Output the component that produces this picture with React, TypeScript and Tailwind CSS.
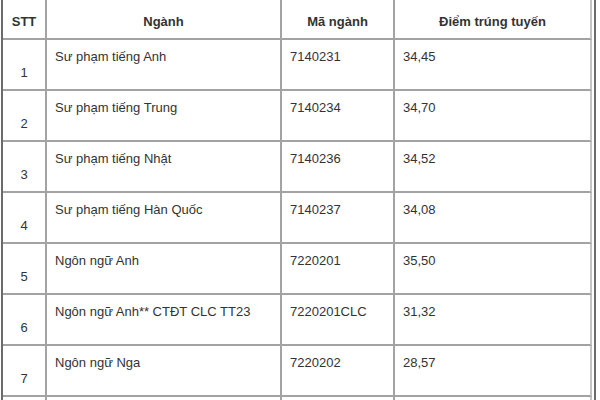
import React from "react";

const rows = [
  ["1", "Sư phạm tiếng Anh", "7140231", "34,45"],
  ["2", "Sư phạm tiếng Trung", "7140234", "34,70"],
  ["3", "Sư phạm tiếng Nhật", "7140236", "34,52"],
  ["4", "Sư phạm tiếng Hàn Quốc", "7140237", "34,08"],
  ["5", "Ngôn ngữ Anh", "7220201", "35,50"],
  ["6", "Ngôn ngữ Anh** CTĐT CLC TT23", "7220201CLC", "31,32"],
  ["7", "Ngôn ngữ Nga", "7220202", "28,57"],
  ["8", "", "", ""],
];

const cell = "border-r-2 border-b-2 border-[#a3a3a3]";
const lastCell = "border-r-2 border-b-2 border-r-[#c4c4c4] border-b-[#a3a3a3]";

export default function App() {
  return (
    <div
      className="w-[600px] h-[400px] overflow-hidden bg-white text-[13px] leading-4 text-[#333]"
      style={{ fontFamily: '"Liberation Sans", Arial, sans-serif' }}
    >
      <div className="ml-px w-[595px] border-l-2 border-r-2 border-[#6b6b6b] pr-[2px]">
        <div className="grid grid-cols-[44px_235px_113px_197px] h-10 font-bold">
          <div className={`${cell} pt-[14px] text-center`}>STT</div>
          <div className={`${cell} pt-[14px] text-center`}>Ngành</div>
          <div className={`${cell} pt-[14px] text-center`}>Mã ngành</div>
          <div className={`${lastCell} pt-[14px] text-center`}>Điểm trúng tuyến</div>
        </div>
        {rows.map((r) => (
          <div key={r[0]} className="grid grid-cols-[44px_235px_113px_197px] h-[51px]">
            <div className={`${cell} pt-[25px] text-center`}>{r[0] !== "8" ? r[0] : ""}</div>
            <div className={`${cell} pt-[9px] pl-2`}>{r[1]}</div>
            <div className={`${cell} pt-[9px] pl-2`}>{r[2]}</div>
            <div className={`${lastCell} pt-[9px] pl-2`}>{r[3]}</div>
          </div>
        ))}
      </div>
    </div>
  );
}
